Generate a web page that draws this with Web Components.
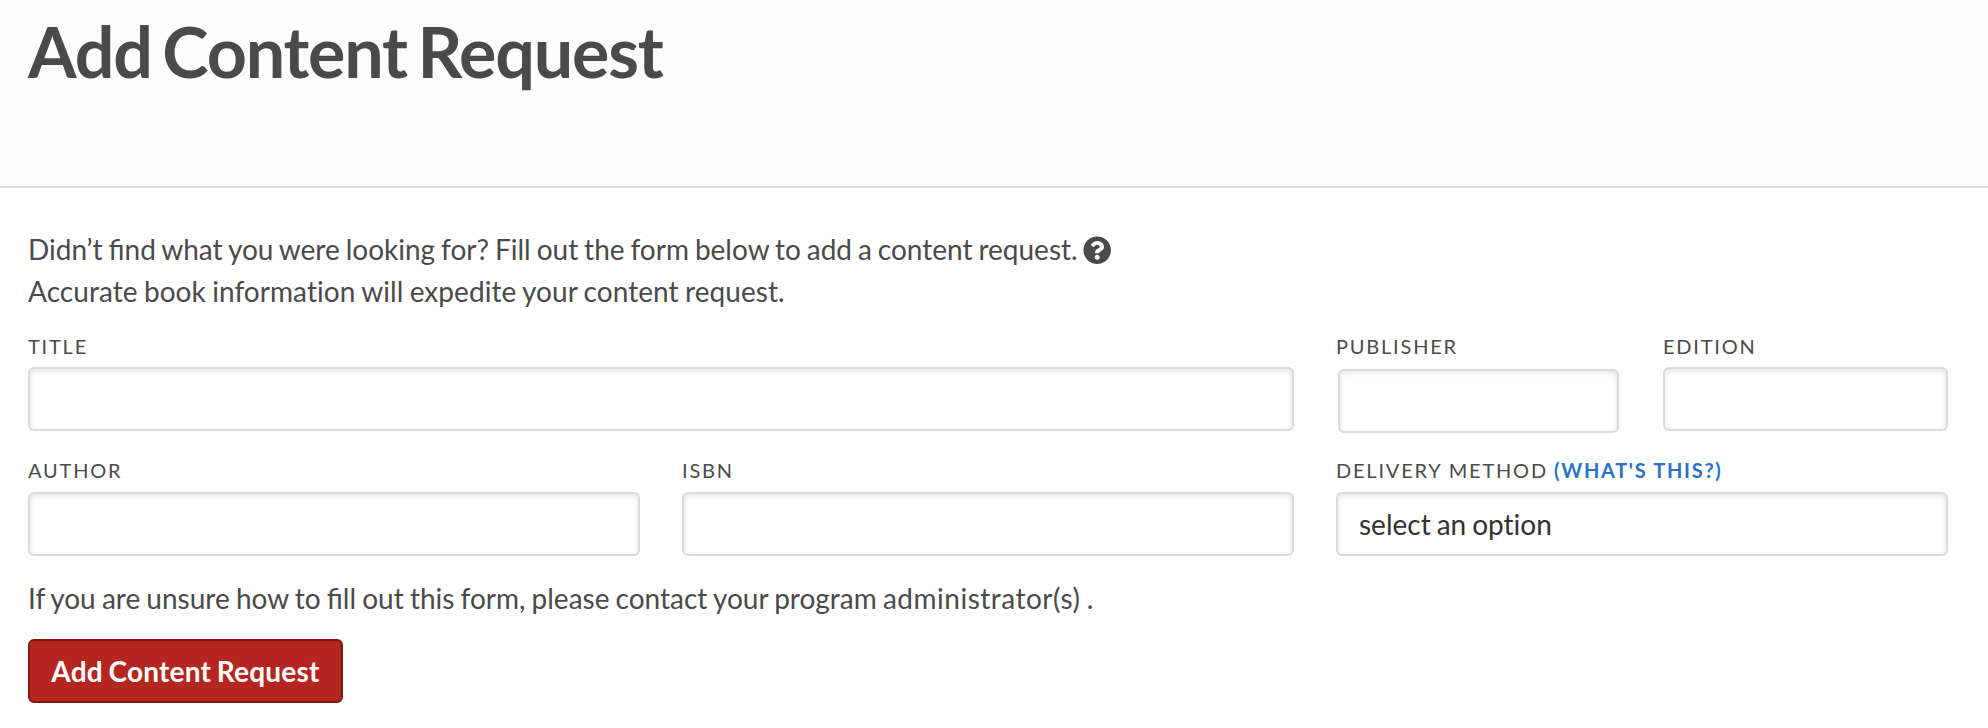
<!DOCTYPE html>
<html lang="en">
<head>
<meta charset="utf-8">
<title>Add Content Request</title>
<style>
    body {
        margin: 0;
        background: #fff;
        color: #4a4a4a;
        font-family: Lato, "Liberation Sans", sans-serif;
        font-size: 28px;
        line-height: 42px;
    }
</style>
</head>
<body>
<content-request-page></content-request-page>

<script>
class PageHeader extends HTMLElement {
    constructor() {
        super();
        this.attachShadow({ mode: 'open' });
        this.shadowRoot.innerHTML = `
            <style>
                :host {
                    display: block;
                    box-sizing: border-box;
                    height: 188px;
                    padding: 8px 28px 0;
                    background: #fdfdfd;
                    border-bottom: 2px solid #dddde1;
                }
                h1 {
                    margin: 0;
                    font-size: 70px;
                    font-weight: 700;
                    line-height: 86px;
                    letter-spacing: -1.2px;
                    word-spacing: -5.2px;
                    white-space: nowrap;
                }
            </style>
            <h1><slot></slot></h1>
        `;
    }
}

class HelpIcon extends HTMLElement {
    constructor() {
        super();
        this.attachShadow({ mode: 'open' });
        this.shadowRoot.innerHTML = `
            <style>
                :host {
                    display: inline-block;
                    width: 28.4px;
                    height: 28.4px;
                    margin-left: -0.8px;
                    line-height: 0;
                    vertical-align: -4.2px;
                }
                svg {
                    width: 100%;
                    height: 100%;
                    fill: currentColor;
                }
            </style>
            <svg viewBox="0 0 512 512" role="img">
                <path d="M504 256c0 136.997-111.043 248-248 248S8 392.997 8 256C8 119.083 119.043 8 256 8s248 111.083 248 248zM262.655 90c-54.497 0-89.255 22.957-116.549 63.758-3.536 5.286-2.353 12.415 2.715 16.258l34.699 26.31c5.205 3.947 12.621 3.008 16.665-2.122 17.864-22.658 30.113-35.797 57.303-35.797 20.429 0 45.698 13.148 45.698 32.958 0 14.976-12.363 22.667-32.534 33.976C247.128 238.528 216 254.941 216 296v4c0 6.627 5.373 12 12 12h56c6.627 0 12-5.373 12-12v-1.333c0-28.462 83.186-29.647 83.186-106.667 0-58.002-60.165-102-116.531-102zM256 338c-25.365 0-46 20.635-46 46 0 25.364 20.635 46 46 46s46-20.636 46-46c0-25.364-20.635-46-46-46z"/>
            </svg>
        `;
    }
}

class FormField extends HTMLElement {
    constructor() {
        super();
        this.attachShadow({ mode: 'open' });
    }

    connectedCallback() {
        this.render();
    }

    render() {
        const value = this.getAttribute('value') || '';
        const label = this.getAttribute('label');
        this.shadowRoot.innerHTML = `
            <style>
                :host {
                    display: flex;
                    flex-direction: column;
                    gap: var(--label-gap, 10px);
                    min-width: 0;
                }
                .label {
                    font-size: 20px;
                    line-height: 24px;
                    letter-spacing: 1.8px;
                    text-transform: uppercase;
                    white-space: nowrap;
                }
                .control {
                    box-sizing: border-box;
                    height: 64px;
                    padding: 9px 21px;
                    border: 2px solid #dadada;
                    border-radius: 6px;
                    background: #fff;
                    box-shadow: inset 0 2px 6px rgba(0, 0, 0, 0.11);
                    color: #333;
                    word-spacing: -1.2px;
                    font-variant-ligatures: none;
                }
                :host([inset]) .control {
                    margin: 2px 2px 0;
                }
            </style>
            <div class="label">${label}<slot></slot></div>
            <div class="control">${value}</div>
        `;
    }
}

class HelpLink extends HTMLElement {
    constructor() {
        super();
        this.attachShadow({ mode: 'open' });
        this.shadowRoot.innerHTML = `
            <style>
                :host {
                    display: inline;
                    margin-left: -0.8px;
                    color: #2b72c6;
                    font-weight: 700;
                    letter-spacing: 1.68px;
                    cursor: pointer;
                }
            </style>
            <slot></slot>
        `;
    }
}

class PrimaryButton extends HTMLElement {
    constructor() {
        super();
        this.attachShadow({ mode: 'open' });
        this.shadowRoot.innerHTML = `
            <style>
                :host {
                    display: inline-flex;
                }
                button {
                    box-sizing: border-box;
                    width: 315px;
                    height: 64px;
                    padding: 0;
                    border: 2px solid #801713;
                    border-radius: 6px;
                    background: #b4261f;
                    color: #fff;
                    font: inherit;
                    font-weight: 700;
                    letter-spacing: 0.22px;
                    word-spacing: -1.5px;
                    white-space: nowrap;
                    cursor: pointer;
                }
            </style>
            <button type="button"><slot></slot></button>
        `;
    }
}

class ContentRequestPage extends HTMLElement {
    constructor() {
        super();
        this.attachShadow({ mode: 'open' });
    }

    connectedCallback() {
        this.render();
    }

    render() {
        this.shadowRoot.innerHTML = `
            <style>
                :host {
                    display: block;
                }
                main {
                    padding: 40px 40px 0 28px;
                }
                p {
                    margin: 0;
                    word-spacing: -1px;
                }
                .lead {
                    word-spacing: -1.23px;
                }
                .plain {
                    letter-spacing: 0.06px;
                    word-spacing: -0.9px;
                    font-variant-ligatures: none;
                }
                .admin {
                    letter-spacing: 0.5px;
                }
                .grid {
                    display: grid;
                    grid-template-columns: repeat(3, 1fr);
                    column-gap: 42px;
                    row-gap: 25px;
                    padding: 22px 0 21px;
                }
                .wide {
                    grid-column: span 2;
                }
                .pair {
                    display: grid;
                    grid-template-columns: 1fr 1fr;
                    gap: 42px;
                }
                .first {
                    --label-gap: 9px;
                }
                primary-button {
                    margin-top: 20px;
                }
            </style>
            <page-header>Add Content Request</page-header>
            <main>
                <p class="lead">Didn’t find what you were looking for? Fill out the form below to add a content request. <help-icon></help-icon></p>
                <p class="plain">Accurate book information will expedite your content request.</p>
                <div class="grid">
                    <form-field class="wide first" label="Title"></form-field>
                    <div class="pair first">
                        <form-field label="Publisher" inset></form-field>
                        <form-field label="Edition"></form-field>
                    </div>
                    <form-field label="Author"></form-field>
                    <form-field label="ISBN"></form-field>
                    <form-field label="Delivery Method " value="select an option"><help-link>(What's this?)</help-link></form-field>
                </div>
                <p>If you are unsure how to fill out this form, please contact your program <span class="admin">administrator(s)</span> .</p>
                <primary-button>Add Content Request</primary-button>
            </main>
        `;
    }
}

customElements.define('page-header', PageHeader);
customElements.define('help-icon', HelpIcon);
customElements.define('form-field', FormField);
customElements.define('help-link', HelpLink);
customElements.define('primary-button', PrimaryButton);
customElements.define('content-request-page', ContentRequestPage);
</script>
</body>
</html>
